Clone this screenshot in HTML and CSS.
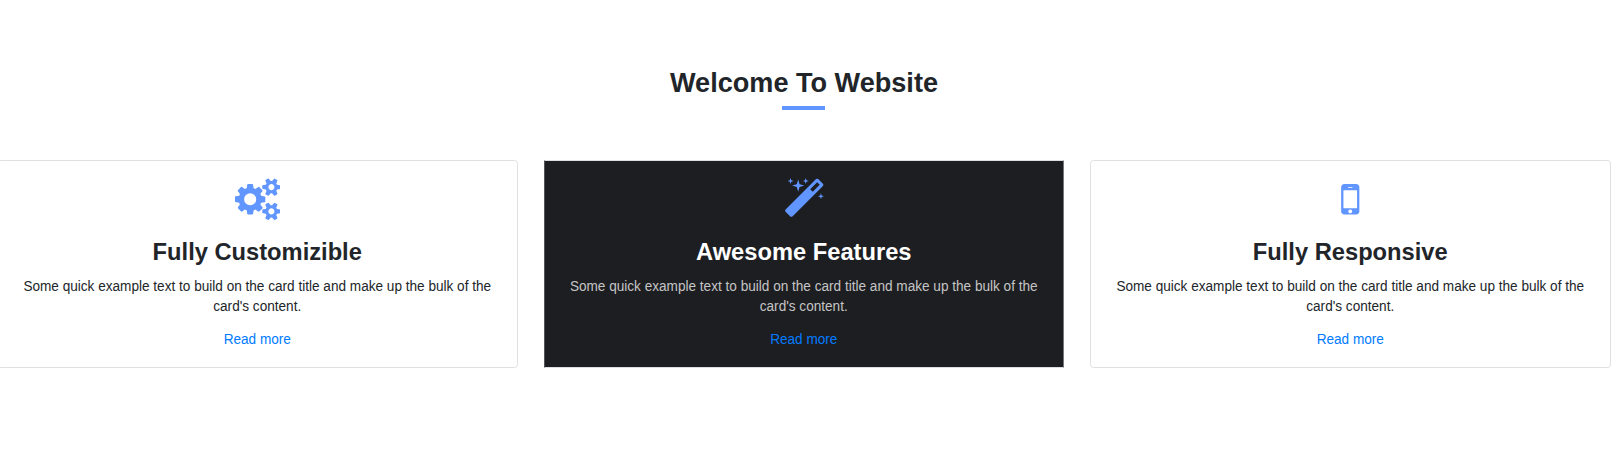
FILE: index.html
```html
<!DOCTYPE html>
<html lang="en">
<head>
<meta charset="utf-8">
<title>Welcome To Website</title>
<link rel="stylesheet" href="styles.css">
</head>
<body>
<section class="features">
  <h2 class="heading"><span>Welcome To Website</span></h2>
  <div class="rule"></div>
  <div class="row">
    <article class="card">
      <svg class="icon icon-wide" viewBox="0 0 1920 1792"><path d="M896 896q0-106-75-181t-181-75-181 75-75 181 75 181 181 75 181-75 75-181zm768 512q0-52-38-90t-90-38-90 38-38 90q0 53 37.500 90.500t90.500 37.500 90.500-37.500 37.500-90.500zm0-1024q0-52-38-90t-90-38-90 38-38 90q0 53 37.500 90.500t90.500 37.500 90.500-37.500 37.500-90.500zm-384 421v185q0 10-7 19.500t-16 10.500l-155 24q-11 35-32 76 34 48 90 115 7 11 7 20 0 12-7 19-23 30-82.500 89.500t-78.500 59.500q-11 0-21-7l-115-90q-37 19-77 31-11 108-23 155-7 24-30 24h-186q-11 0-20-7.500t-10-17.500l-23-153q-34-10-75-31l-118 89q-7 7-20 7-11 0-21-8-144-133-144-160 0-9 7-19 10-14 41-53t47-61q-23-44-35-82l-152-24q-10-1-17-9.500t-7-19.500v-185q0-10 7-19.500t16-10.500l155-24q11-35 32-76-34-48-90-115-7-11-7-20 0-12 7-20 22-30 82-89t79-59q11 0 21 7l115 90q34-18 77-32 11-108 23-154 7-24 30-24h186q11 0 20 7.500t10 17.500l23 153q34 10 75 31l118-89q8-7 20-7 11 0 21 8 144 133 144 160 0 8-7 19-12 16-42 54t-45 60q23 48 34 82l152 23q10 2 17 10.500t7 19.500zm640 533v140q0 16-149 31-12 27-30 52 51 113 51 138 0 4-4 7-122 71-124 71-8 0-46-47t-52-68q-20 2-30 2t-30-2q-14 21-52 68t-46 47q-2 0-124-71-4-3-4-7 0-25 51-138-18-25-30-52-149-15-149-31v-140q0-16 149-31 13-29 30-52-51-113-51-138 0-4 4-7 4-2 35-20t59-34 30-16q8 0 46 46.500t52 67.500q20-2 30-2t30 2q51-71 92-112l6-2q4 0 124 70 4 3 4 7 0 25-51 138 17 23 30 52 149 15 149 31zm0-1024v140q0 16-149 31-12 27-30 52 51 113 51 138 0 4-4 7-122 71-124 71-8 0-46-47t-52-68q-20 2-30 2t-30-2q-14 21-52 68t-46 47q-2 0-124-71-4-3-4-7 0-25 51-138-18-25-30-52-149-15-149-31v-140q0-16 149-31 13-29 30-52-51-113-51-138 0-4 4-7 4-2 35-20t59-34 30-16q8 0 46 46.500t52 67.500q20-2 30-2t30 2q51-71 92-112l6-2q4 0 124 70 4 3 4 7 0 25-51 138 17 23 30 52 149 15 149 31z"/></svg>
      <h4 class="title"><span>Fully Customizible</span></h4>
      <p class="text">Some quick example text to build on the card title and make up the bulk of the<br>card's content.</p>
      <a class="link">Read more</a>
    </article>
    <article class="card card-dark">
      <svg class="icon" viewBox="0 0 1792 1792"><path d="M1254 581l293-293-107-107-293 293zm447-293q0 27-18 45l-1286 1286q-18 18-45 18t-45-18l-198-198q-18-18-18-45t18-45l1286-1286q18-18 45-18t45 18l198 198q18 18 18 45zm-1351-190l98 30-98 30-30 98-30-98-98-30 98-30 30-98zm350 162l196 60-196 60-60 196-60-196-196-60 196-60 60-196zm930 478l98 30-98 30-30 98-30-98-98-30 98-30 30-98zm-640-640l98 30-98 30-30 98-30-98-98-30 98-30 30-98z"/></svg>
      <h4 class="title"><span>Awesome Features</span></h4>
      <p class="text">Some quick example text to build on the card title and make up the bulk of the<br>card's content.</p>
      <a class="link">Read more</a>
    </article>
    <article class="card">
      <svg class="icon" viewBox="0 0 1792 1792"><path d="M976 1408q0-33-23.500-56.500t-56.500-23.500-56.500 23.500-23.500 56.500 23.500 56.500 56.500 23.500 56.500-23.500 23.500-56.500zm208-160v-704q0-13-9.500-22.500t-22.500-9.500h-512q-13 0-22.500 9.500t-9.500 22.500v704q0 13 9.500 22.500t22.500 9.500h512q13 0 22.500-9.500t9.500-22.500zm-192-848q0-16-16-16h-160q-16 0-16 16t16 16h160q16 0 16-16zm288-16v1024q0 52-38 90t-90 38h-512q-52 0-90-38t-38-90v-1024q0-52 38-90t90-38h512q52 0 90 38t38 90z"/></svg>
      <h4 class="title"><span>Fully Responsive</span></h4>
      <p class="text">Some quick example text to build on the card title and make up the bulk of the<br>card's content.</p>
      <a class="link">Read more</a>
    </article>
  </div>
</section>
</body>
</html>
```
FILE: styles.css
```css
* { box-sizing: border-box; }
body {
  margin: 0;
  overflow: hidden;
  background: #fff;
  color: #212529;
  font-family: "Liberation Sans", Arial, sans-serif;
}
.features {
  height: 452px;
  padding-top: 66px;
  display: flex;
  flex-direction: column;
  align-items: center;
}
.heading {
  margin: 0;
  padding-right: 3px;
  font-size: 27.1px;
  line-height: 34px;
}
.rule {
  width: 42.5px;
  height: 3.5px;
  margin: 6px 4px 0 0;
  background: #6195ff;
}
.row {
  align-self: flex-start;
  display: grid;
  grid-template-columns: repeat(3, 520.5px);
  gap: 26px;
  width: 1613.5px;
  margin: 50.5px 0 0 -3px;
}
.card {
  height: 208px;
  padding-top: 17px;
  display: flex;
  flex-direction: column;
  align-items: center;
  text-align: center;
  background: #fff;
  border: 1px solid #dfdfdf;
  border-radius: 3.5px;
}
.card-dark {
  background: #1d1e22;
  border-color: #dfdfdf #777 #dfdfdf #555;
  border-radius: 1px;
  color: #c5c5c5;
}
.icon {
  display: block;
  width: 42.5px;
  height: 42.5px;
  fill: #6195ff;
}
.icon-wide { width: 45.5px; }
.title {
  margin: 17px 0 0;
  font-size: 23.7px;
  line-height: 28px;
}
.card-dark .title { color: #fff; }
.text,
.link {
  font-size: 13.6px;
  line-height: 19px;
  white-space: nowrap;
  transform: scaleY(1.08);
}
.text { margin: 11px 0 0; }
.link {
  margin-top: 15px;
  color: #007bff;
}
```
